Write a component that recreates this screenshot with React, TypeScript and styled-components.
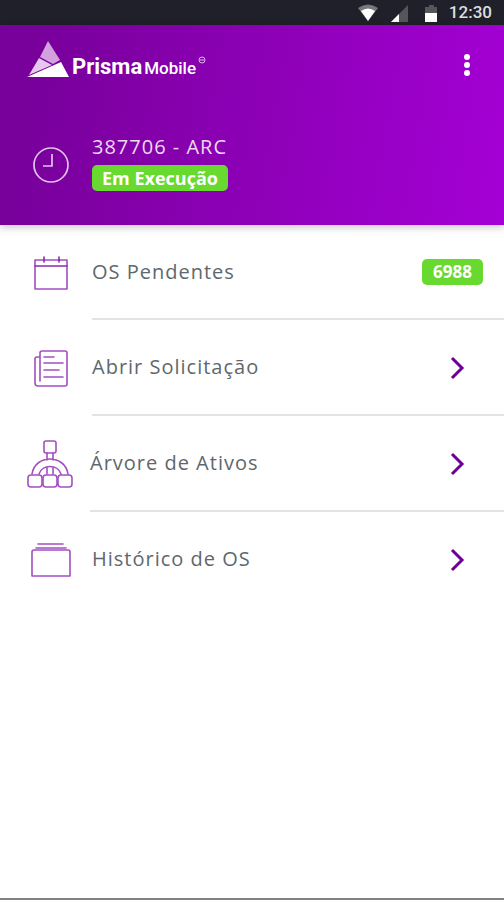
import React from "react";
import styled, { createGlobalStyle } from "styled-components";

const GlobalStyle = createGlobalStyle`
  *, *::before, *::after { box-sizing: border-box; }
  body { margin: 0; background: #fff; font-family: "Open Sans", "Noto Sans", sans-serif; }
  button { font: inherit; color: inherit; background: none; border: 0; padding: 0; cursor: pointer; }
`;

const Screen = styled.div`
  display: flex;
  flex-direction: column;
  min-height: 100vh;
  background: #fff;
  border-bottom: 2px solid #858086;
`;

const StatusBar = styled.div`
  display: flex;
  align-items: center;
  justify-content: flex-end;
  height: 25px;
  padding: 0 12px 0 0;
  background: #20202a;
`;

const StatusIcons = styled.svg`
  display: block;
  width: 84px;
  height: 20px;
  margin-right: 7px;
`;

const Clock = styled.time`
  color: #dededf;
  font: 500 17px/25px Roboto, sans-serif;
`;

const Header = styled.header`
  position: relative;
  display: flex;
  flex-direction: column;
  min-height: 200px;
  background: linear-gradient(100deg, #78009b 8%, #8900b1 42%, #a500d6 100%);
  box-shadow: 0 2px 8px rgba(0, 0, 0, 0.24);
`;

const TopBar = styled.div`
  display: flex;
  align-items: center;
  justify-content: space-between;
  height: 80px;
  padding: 0 24px 0 27px;
`;

const Brand = styled.h1`
  display: flex;
  align-items: flex-end;
  height: 38px;
  margin: 0 0 12px;
  color: #fff;
  font: 700 22px/20px Roboto, sans-serif;
`;

const BrandMark = styled.svg`
  display: block;
  width: 43px;
  height: 38px;
  margin-right: 2px;
`;

const BrandWords = styled.span`
  display: flex;
  align-items: baseline;
  gap: 2px;
`;

const BrandSub = styled.span`
  font-size: 17px;
  font-weight: 500;
`;

const BrandSeal = styled.svg`
  width: 8px;
  height: 8px;
  margin: 0 0 14px 2px;
`;

const MenuButton = styled.button`
  display: flex;
  justify-content: center;
  width: 26px;
  height: 32px;
`;

const Order = styled.section`
  display: grid;
  grid-template-columns: 92px 1fr;
  align-items: end;
  padding-top: 29px;
`;

const OrderInfo = styled.div`
  display: flex;
  flex-direction: column;
  align-items: flex-start;
  gap: 6px;
`;

const OrderName = styled.span`
  color: #ecd9f2;
  font-size: 20px;
  line-height: 25px;
  letter-spacing: 1px;
`;

const Badge = styled.span<{ $large?: boolean }>`
  padding: 0 ${(p) => (p.$large ? "10px" : "11px")};
  border-radius: 5px;
  background: #68d92f;
  color: #fff;
  font-size: ${(p) => (p.$large ? "18px" : "17px")};
  font-weight: 700;
  line-height: 26px;
`;

const IconCell = styled.span`
  display: flex;
  justify-content: center;
  width: 92px;
  padding-left: 10px;
`;

const OrderIcon = styled(IconCell)`
  padding-bottom: 7px;
`;

const List = styled.ul`
  margin: 0;
  padding: 0;
  list-style: none;
`;

const Row = styled.li`
  height: 96px;
  &:first-child { height: 95px; }
`;

const RowButton = styled.button`
  display: grid;
  grid-template-columns: 92px 1fr;
  width: 100%;
  height: 100%;
  text-align: left;
`;

const RowIcon = styled(IconCell)<{ $wide?: boolean }>`
  align-items: center;
  padding-right: ${(p) => (p.$wide ? "2px" : "0")};
`;

const RowBody = styled.span<{ $wide?: boolean; $last?: boolean; $badge?: boolean }>`
  display: flex;
  align-items: center;
  justify-content: space-between;
  margin-left: ${(p) => (p.$wide ? "-2px" : "0")};
  padding-right: ${(p) => (p.$badge ? "21px" : "36px")};
  border-bottom: 2px solid ${(p) => (p.$last ? "transparent" : "#e3e3e3")};
`;

const Label = styled.span`
  color: #5e686c;
  font-size: 20px;
  line-height: 26px;
  letter-spacing: 1px;
`;

const Glyph = styled.svg`
  display: block;
  overflow: visible;
  fill: none;
  stroke: #a24fc0;
  stroke-width: 1.6;
  stroke-linecap: round;
  stroke-linejoin: round;
`;

const CalendarIcon = () => (
  <Glyph width="34" height="34" viewBox="0 0 34 34">
    <path d="M1 4h32v29H1z" />
    <path d="M1 10h32M10 1v5M25 1v5" stroke="#8a28ad" />
  </Glyph>
);

const FormIcon = () => (
  <Glyph width="34" height="38" viewBox="0 0 34 38">
    <path d="M6 32V4q0-2 2-2h23q2 0 2 2v31q0 2-2 2H4q-3 0-3-3V10q0-2 2-2h3" />
    <path d="M10 8h10M10 14h19M10 21h15M10 28h19" />
  </Glyph>
);

const TreeIcon = () => (
  <Glyph width="46" height="48" viewBox="0 0 46 48">
    <rect x="17" y="1" width="12" height="12" rx="2" />
    <path d="M20 13v7M26 13v7M5 34C8 14 38 14 41 34M12 34C15 24 31 24 34 34M20 28v6M26 28v6" />
    <rect x="1" y="35" width="14" height="12" rx="3" />
    <rect x="16" y="35" width="14" height="12" rx="3" />
    <rect x="31" y="35" width="14" height="12" rx="3" />
  </Glyph>
);

const HistoryIcon = () => (
  <Glyph width="40" height="34" viewBox="0 0 40 34">
    <path d="M7 1h25M5 5h30" />
    <path d="M3 7h34q2 0 2 2v24H1V9q0-2 2-2z" />
  </Glyph>
);

const Arrow = () => (
  <svg width="20" height="26" viewBox="0 0 20 26" fill="none" stroke="#6f0096" strokeWidth="3" aria-hidden="true">
    <path d="M4 4l10 10L4 24" />
  </svg>
);

const items = [
  { label: "OS Pendentes", icon: <CalendarIcon />, count: 6988 },
  { label: "Abrir Solicitação", icon: <FormIcon /> },
  { label: "Árvore de Ativos", icon: <TreeIcon />, wide: true },
  { label: "Histórico de OS", icon: <HistoryIcon /> },
];

export default function App() {
  return (
    <Screen>
      <GlobalStyle />
      <StatusBar>
        <StatusIcons viewBox="0 0 84 20" aria-hidden="true">
          <path d="M0 5Q10 -2 20 5L10 18z" fill="#77777c" />
          <path d="M3 8Q10 3 17 8L10 18z" fill="#fff" />
          <path d="M50 2v17H33z" fill="#55555b" />
          <path d="M41 11v8h-8z" fill="#fff" />
          <path d="M71 2h5v2h3v7H67V4h4z" fill="#55555b" />
          <path d="M67 10h12v9H67z" fill="#fff" />
        </StatusIcons>
        <Clock>12:30</Clock>
      </StatusBar>
      <Header>
        <TopBar>
          <Brand>
            <BrandMark viewBox="0 0 43 38" aria-hidden="true">
              <path d="M21 1L33 20 26 24 13 17z" fill="#d2a2de" />
              <path d="M12 18L25 25 2 35z" fill="#e6c8ee" />
              <path d="M0 37L34 22 42 37z" fill="#fff" />
            </BrandMark>
            <BrandWords>
              Prisma <BrandSub>Mobile</BrandSub>
            </BrandWords>
            <BrandSeal viewBox="0 0 8 8" fill="none" stroke="#dfb9ea" aria-hidden="true">
              <circle cx="4" cy="4" r="3" />
              <path d="M2 4h4" />
            </BrandSeal>
          </Brand>
          <MenuButton aria-label="Menu">
            <svg width="8" height="32" viewBox="0 0 8 32" fill="#fff" aria-hidden="true">
              <circle cx="4" cy="8" r="3" />
              <circle cx="4" cy="16" r="3" />
              <circle cx="4" cy="24" r="3" />
            </svg>
          </MenuButton>
        </TopBar>
        <Order>
          <OrderIcon>
            <svg width="38" height="38" viewBox="0 0 38 38" fill="none" stroke="#e3c2ec" strokeWidth="1.7" aria-hidden="true">
              <circle cx="19" cy="19" r="17" />
              <path d="M20 8v12h-9" />
            </svg>
          </OrderIcon>
          <OrderInfo>
            <OrderName>387706 - ARC</OrderName>
            <Badge $large>Em Execução</Badge>
          </OrderInfo>
        </Order>
      </Header>
      <List>
        {items.map((item, i) => (
          <Row key={item.label}>
            <RowButton>
              <RowIcon $wide={item.wide}>{item.icon}</RowIcon>
              <RowBody $wide={item.wide} $last={i === items.length - 1} $badge={!!item.count}>
                <Label>{item.label}</Label>
                {item.count ? <Badge>{item.count}</Badge> : <Arrow />}
              </RowBody>
            </RowButton>
          </Row>
        ))}
      </List>
    </Screen>
  );
}
